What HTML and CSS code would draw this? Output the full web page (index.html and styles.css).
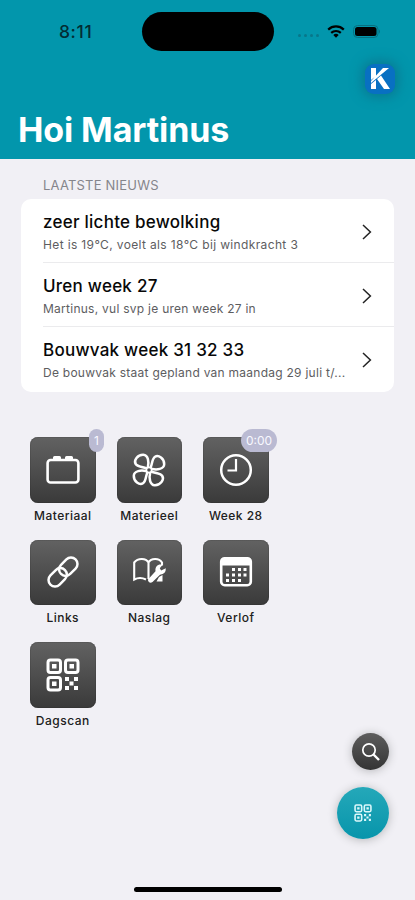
FILE: index.html
```html
<!DOCTYPE html>
<html lang="nl">
<head>
<meta charset="utf-8">
<meta name="viewport" content="width=device-width, initial-scale=1">
<title>Hoi Martinus</title>
<link rel="stylesheet" href="styles.css">
</head>
<body>
<svg width="0" height="0" class="defs" aria-hidden="true">
  <symbol id="qr" viewBox="0 0 34 34">
    <g fill="none" stroke="currentColor" stroke-width="3">
      <rect x="2" y="2" width="12.500" height="12.500" rx="2.5"/>
      <rect x="19.500" y="2" width="12.500" height="12.500" rx="2.5"/>
      <rect x="2" y="19.500" width="12.500" height="12.500" rx="2.5"/>
    </g>
    <path fill="currentColor" d="M6 6h4.500v4.500H6zM23.500 6H28v4.500h-4.500zM6 23.500h4.500V28H6zM19 19h4v4h-4zM28 19h4v4h-4zM23.500 23.500h4v4h-4zM19 28h4v4h-4zM28 28h4v4h-4z"/>
  </symbol>
  <symbol id="chevron" viewBox="0 0 10 16">
    <path d="M1 1l7.4 7L1 15" fill="none" stroke="currentColor" stroke-width="1.5"/>
  </symbol>
</svg>
<header class="header">
  <div class="status">
    <span class="time">8:11</span>
    <span class="island"></span>
    <span class="signals">
      <span class="dots"><i></i><i></i><i></i><i></i></span>
      <svg class="wifi" viewBox="0 0 18 13"><g fill="none" stroke="#000" stroke-width="2.2"><path d="M1.2 4.6a11.2 11.2 0 0 1 15.6 0"/><path d="M4.2 7.9a7 7 0 0 1 9.6 0"/></g><path d="M6.3 10a4 4 0 0 1 5.4 0L9 12.8z"/></svg>
      <svg class="battery" viewBox="0 0 28 14"><rect x=".5" y=".5" width="24.500" height="12" rx="4" fill="none" stroke="#087080"/><rect x="2" y="2" width="21.500" height="9" rx="2.5"/><path d="M26 4.5q2 2 0 4z" fill="#087080"/></svg>
    </span>
  </div>
  <div class="toolbar">
    <span class="logo"><svg viewBox="0 0 20 22"><path fill="#fff" d="M1 0h5v8L1 12zM13 0h6L1 15v-2zM1 16l5-4v9H1zM7 11l4-3.5L20 21h-6z"/></svg></span>
  </div>
  <h1>Hoi Martinus</h1>
</header>
<main>
  <h2>LAATSTE NIEUWS</h2>
  <section class="news">
    <article class="row"><div class="copy"><h3>zeer lichte bewolking</h3><p class="weather">Het is 19°C, voelt als 18°C bij windkracht 3</p></div><svg class="chev"><use href="#chevron"/></svg></article>
    <article class="row"><div class="copy"><h3>Uren week 27</h3><p>Martinus, vul svp je uren week 27 in</p></div><svg class="chev"><use href="#chevron"/></svg></article>
    <article class="row"><div class="copy"><h3>Bouwvak week 31 32 33</h3><p>De bouwvak staat gepland van maandag 29 juli t/...</p></div><svg class="chev"><use href="#chevron"/></svg></article>
  </section>
  <nav class="grid">
    <div class="item"><div class="tile"><svg viewBox="0 0 36 36"><rect x="2.600" y="8" width="30.800" height="22.500" rx="3" fill="none" stroke="#fff" stroke-width="2.600"/><path fill="#fff" d="M8 8V5.500Q8 4 9.500 4h5Q16 4 16 5.500V8zM20 8V5.500Q20 4 21.500 4h5Q28 4 28 5.500V8z"/></svg><span class="badge one">1</span></div><span class="label">Materiaal</span></div>
    <div class="item"><div class="tile"><svg viewBox="0 0 36 36"><g fill="none" stroke="#fff" stroke-width="2.500" stroke-linejoin="round"><path id="blade" d="M16.800 15.500C18.200 10 17.200 3 12.300 2.800C6.500 2.600 2.500 8.500 4.700 12C6.500 15 11.500 14.500 15.800 16.500"/><use href="#blade" transform="rotate(90 18 18)"/><use href="#blade" transform="rotate(180 18 18)"/><use href="#blade" transform="rotate(270 18 18)"/><circle cx="18" cy="18" r="2.600" stroke-width="1.600"/></g></svg></div><span class="label">Materieel</span></div>
    <div class="item"><div class="tile"><svg viewBox="0 0 36 36"><g fill="none" stroke="#fff" stroke-width="2.500"><circle cx="18" cy="18" r="14.800"/><path d="M18 7v11.500H9.500" stroke-width="2.200"/></g></svg><span class="badge hours">0:00</span></div><span class="label">Week 28</span></div>
    <div class="item"><div class="tile"><svg viewBox="0 0 36 36"><g fill="none" stroke="#fff" stroke-width="2.500"><rect x="-10.300" y="-6.500" width="20.600" height="13" rx="6.500" transform="translate(23.300 12.700) rotate(-45)"/><rect x="-10.300" y="-6.500" width="20.600" height="13" rx="6.500" transform="translate(12.700 23.300) rotate(-45)"/></g></svg></div><span class="label">Links</span></div>
    <div class="item"><div class="tile"><svg viewBox="0 0 36 36"><g fill="none" stroke="#fff" stroke-width="2.100"><path d="M17.500 25V8.500C15 4 7 3.500 3.200 8.500v17C7 23.500 11 23.500 15 25.500M17.500 8.500C20 4 28 3.500 31 8.500v3"/></g><path fill="#fff" d="M17 25.500l7.500-8.300q-.8-4.800 3.800-6.600l3.500-.2-3 3.800 1.300 2.300 4.700-2.300q.4 5.500-5.800 6.500l-7.500 7.400q-2.300 1.200-3.600-.2-1.200-1.200-.9-2.400zM28 23l3.500-2v6.500H25.500z"/></svg></div><span class="label">Naslag</span></div>
    <div class="item"><div class="tile"><svg viewBox="0 0 36 36"><rect x="3.200" y="4.200" width="29.600" height="27" rx="3.500" fill="none" stroke="#fff" stroke-width="2.600"/><path fill="#fff" d="M3 5h30v6.500H3zM14 14h3v3h-3zM20 14h3v3h-3zM25.500 14h3v3h-3zM8 19.500h3v3H8zM14 19.500h3v3h-3zM20 19.500h3v3h-3zM25.500 19.500h3v3h-3zM8 25h3v3H8zM14 25h3v3h-3zM20 25h3v3h-3z"/></svg></div><span class="label">Verlof</span></div>
    <div class="item"><div class="tile"><svg viewBox="0 0 36 36"><use href="#qr" x="1" y="1" width="34" height="34"/></svg></div><span class="label">Dagscan</span></div>
  </nav>
</main>
<footer>
  <button class="round search" aria-label="Zoeken"><svg viewBox="0 0 20 20"><circle cx="8" cy="8" r="6.200" fill="none" stroke="#fff" stroke-width="1.700"/><path d="M12.500 12.500l5.500 5.500" stroke="#fff" stroke-width="2.400"/></svg></button>
  <button class="round scan" aria-label="Scannen"><svg><use href="#qr"/></svg></button>
  <span class="home"></span>
</footer>
</body>
</html>
```
FILE: styles.css
```css
* { box-sizing: border-box; }
body { margin: 0; height: 900px; overflow: hidden; background: #f1f0f5; font-family: Inter, "Liberation Sans", sans-serif; color: #080808; display: flex; flex-direction: column; }
h1, h2, h3, p { margin: 0; white-space: nowrap; }
.defs { position: absolute; }
.header { height: 158.500px; background: #0296ac; flex: none; }
.status { height: 63px; padding-left: 59px; display: flex; align-items: center; }
.time { width: 83px; font-size: 17.500px; font-weight: 500; color: #032c33; letter-spacing: .6px; }
.island { width: 132px; height: 39px; border-radius: 20px; background: #000; }
.signals { display: flex; align-items: center; margin-left: 24px; }
.dots { display: flex; gap: 3px; padding-top: 8px; width: 29px; }
.dots i { width: 3px; height: 3px; border-radius: 50%; background: #08778a; }
.wifi { width: 18px; height: 13px; }
.battery { width: 28px; height: 14px; margin-left: 8px; }
.toolbar { height: 45px; padding: 1px 20px 0 0; display: flex; justify-content: flex-end; }
.logo { width: 30px; height: 30px; border-radius: 9px; background: #0870c2; box-shadow: 0 0 12px 3px #087a92; display: grid; place-items: center; }
.logo svg { width: 20px; height: 22px; margin-right: 1px; }
h1 { padding-left: 18px; font-size: 34px; line-height: 43px; font-weight: 700; color: #fff; letter-spacing: -.1px; }
main { flex: 1; }
h2 { margin: 17px 0 5px 43px; font-size: 13px; line-height: 18px; font-weight: 400; color: #85858b; letter-spacing: .2px; }
.news { margin: 0 21px; background: #fff; border-radius: 10px; padding-left: 22px; height: 193px; }
.row { height: 64.300px; display: flex; align-items: flex-start; padding: 12px 22px 0 0; border-bottom: 1px solid #ebebed; }
.row:last-child { border: 0; }
.copy { flex: 1; min-width: 0; }
h3 { font-size: 17px; line-height: 22px; font-weight: 500; letter-spacing: .25px; }
.row p { font-size: 12px; line-height: 16px; margin-top: 4px; color: #5d5d5f; letter-spacing: .26px; }
.row .weather { letter-spacing: .36px; }
.chev { width: 10px; height: 16px; margin-top: 13px; color: #222; }
.grid { margin: 45.500px 0 0 30px; display: grid; grid-template-columns: repeat(3, 65.500px); column-gap: 21px; grid-auto-rows: 102.500px; }
.item { display: flex; flex-direction: column; align-items: center; }
.tile { position: relative; width: 65.500px; height: 65.500px; border-radius: 8px; background: linear-gradient(#626262, #3a3a3a); display: grid; place-items: center; color: #fff; box-shadow: inset 0 0 1px #111; }
.tile svg { width: 36px; height: 36px; }
.label { margin-top: 4px; font-size: 12px; line-height: 17px; font-weight: 500; letter-spacing: .48px; white-space: nowrap; color: #202020; }
.badge { position: absolute; top: -8px; height: 23px; border-radius: 12px; background: #babad2; color: #f8f8ff; font-size: 12px; line-height: 23px; text-align: center; }
.one { left: 59px; width: 15px; }
.hours { left: 38px; width: 36px; }
footer { position: absolute; left: 0; right: 0; bottom: 0; height: 168px; }
.round { position: absolute; padding: 0; border: 0; border-radius: 50%; display: grid; place-items: center; color: #dbf7fa; box-shadow: 0 1px 10px #b5b5b8; }
.search { left: 352px; top: 1px; width: 37px; height: 37px; background: linear-gradient(#5d5d5d, #343434); }
.search svg { width: 20px; height: 20px; }
.scan { left: 337px; top: 55px; width: 52px; height: 52px; background: linear-gradient(#25a8b9, #0795ab); }
.scan svg { width: 18px; height: 18px; }
.home { position: absolute; left: 134px; bottom: 8px; width: 148px; height: 5px; border-radius: 3px; background: #000; }
```
